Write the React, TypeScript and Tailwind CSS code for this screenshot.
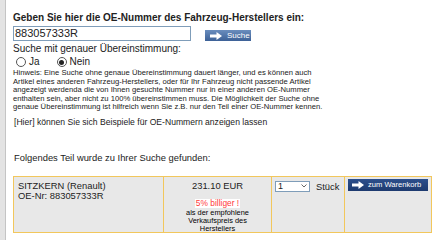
import React from 'react';

const Arrow = () => (
  <svg width="12" height="8" viewBox="0 0 12 8" className="shrink-0">
    <path d="M0 2.5h6.5V0L12 4 6.5 8V5.5H0z" fill="#fff" />
  </svg>
);

const Radio = ({ checked }: { checked?: boolean }) => (
  <span className="w-[10px] h-[10px] rounded-full border border-[#555] bg-white flex items-center justify-center">
    {checked && <span className="w-[5px] h-[5px] rounded-full bg-[#222]" />}
  </span>
);

export default function App() {
  return (
    <div className="w-[446px] h-[240px] bg-white flex overflow-hidden font-['Liberation_Sans',Arial,sans-serif] text-[#222]">
      <div className="w-[6px] shrink-0 bg-[#e3e3e3] border-r border-[#c4c4c4]" />

      <div className="flex-1 flex flex-col pl-[7px] pt-[12px]">
        <div className="text-[10px] font-bold leading-[12px]">
          Geben Sie hier die OE-Nummer des Fahrzeug-Herstellers ein:
        </div>

        <div className="flex items-end mt-[2px]">
          <div className="w-[178px] h-[15px] border border-[#7f9db9] flex items-center px-[1px] text-[11px] leading-none">
            883057333R
          </div>
          <button className="ml-[14px] w-[46px] h-[11px] bg-gradient-to-b from-[#6a8dbd] to-[#3d6197] flex items-center gap-[5px] px-[5px] text-white text-[8px] leading-none">
            <Arrow />
            Suche
          </button>
        </div>

        <div className="text-[10px] leading-[12px] mt-[2px]">Suche mit genauer Übereinstimmung:</div>

        <div className="flex items-center text-[10px] leading-[12px] mt-[1px] pl-[3px]">
          <Radio />
          <span className="ml-[3px]">Ja</span>
          <span className="ml-[17px]"><Radio checked /></span>
          <span className="ml-[3px]">Nein</span>
        </div>

        <div className="text-[7.65px] leading-[8.6px] mt-[1px] w-[320px]">
          Hinweis: Eine Suche ohne genaue Übereinstimmung dauert länger, und es können auch<br />
          Artikel eines anderen Fahrzeug-Herstellers, oder für Ihr Fahrzeug nicht passende Artikel<br />
          angezeigt werdenda die von Ihnen gesuchte Nummer nur in einer anderen OE-Nummer<br />
          enthalten sein, aber nicht zu 100% übereinstimmen muss. Die Möglichkeit der Suche ohne<br />
          genaue Übereinstimmung ist hilfreich wenn Sie z.B. nur den Teil einer OE-Nummer kennen.
        </div>

        <div className="text-[8.6px] leading-[10px] mt-[5px] pl-[1px]">
          [Hier] können Sie sich Beispiele für OE-Nummern anzeigen lassen
        </div>

        <div className="text-[9.4px] leading-[11px] mt-[25px] pl-[1px]">
          Folgendes Teil wurde zu Ihrer Suche gefunden:
        </div>

        <div className="mt-[13px] w-[419px] h-[57px] border border-[#f2c75c] flex bg-[#e8e8e8] text-[9.4px] leading-[10px]">
          <div className="w-[150px] border-r border-[#f2c75c] px-[4px] pt-[4px]">
            <div>SITZKERN (Renault)</div>
            <div>OE-Nr: 883057333R</div>
          </div>
          <div className="w-[108px] border-r border-[#f2c75c] flex flex-col items-center pt-[4px]">
            <div>231.10 EUR</div>
            <div className="mt-[8px] bg-white text-[#ff3b3b] text-[8.4px] leading-[9px] px-[1px]">5% billiger !</div>
            <div className="text-[7.4px] leading-[8px] text-center mt-[1px] text-black">
              als der empfohlene<br />Verkaufspreis des<br />Herstellers
            </div>
          </div>
          <div className="w-[73px] border-r border-[#f2c75c] flex items-start pt-[4px] pl-[3px]">
            <div className="w-[35px] h-[11px] border border-[#7f9db9] bg-white flex items-center justify-between px-[2px] text-[9px] leading-none">
              <span>1</span>
              <svg width="6" height="4" viewBox="0 0 6 4"><path d="M0.5 0.5L3 3l2.5-2.5" stroke="#666" fill="none" /></svg>
            </div>
            <span className="ml-[6px] leading-[11px]">Stück</span>
          </div>
          <div className="flex-1 pt-[2px] pl-[3px]">
            <button className="w-[80px] h-[12px] bg-gradient-to-b from-[#2c4f8c] to-[#1d3a6f] flex items-center gap-[4px] px-[4px] text-white text-[7.6px] leading-none">
              <Arrow />
              zum Warenkorb
            </button>
          </div>
        </div>
      </div>
    </div>
  );
}
